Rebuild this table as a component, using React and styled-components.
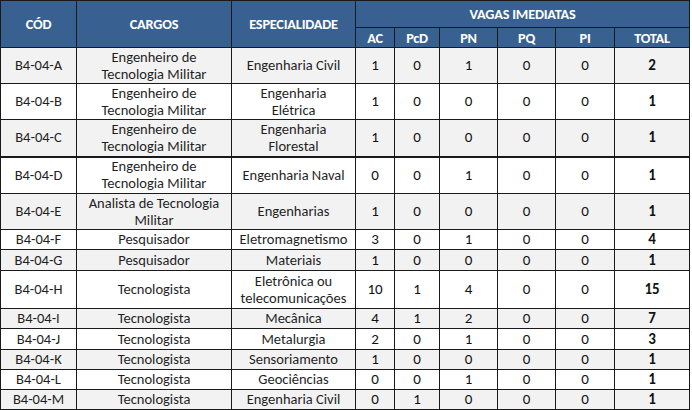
import React from 'react';
import styled, { createGlobalStyle } from 'styled-components';

const GlobalStyle = createGlobalStyle`
  html, body {
    margin: 0;
    padding: 0;
    background: #ffffff;
  }
`;

const HEAD_BLUE = '#386192';

const Table = styled.table`
  border-collapse: collapse;
  table-layout: fixed;
  width: 689px;
  font-family: Carlito, Calibri, Lato, "Liberation Sans", sans-serif;
  color: #1f1f1f;
`;

const HeadCell = styled.th`
  background: ${HEAD_BLUE};
  color: #ffffff;
  font-size: 14.3px;
  font-weight: 700;
  letter-spacing: -0.2px;
  border: 1px solid #1a1a1a;
  padding: 0;
  text-align: center;
  vertical-align: middle;
  height: ${(p) => p.h}px;
`;

const Row = styled.tr`
  height: ${(p) => p.h}px;
  background: ${(p) => (p.shaded ? '#f2f2f2' : '#ffffff')};
  border-top: ${(p) => (p.thick ? '2px' : '1px')} solid #1a1a1a;
`;

const Cell = styled.td`
  border: 1px solid #1a1a1a;
  padding: 0;
  text-align: center;
  vertical-align: middle;
  font-size: 14.5px;
  line-height: 17px;
  white-space: nowrap;
`;

const NumCell = styled(Cell)`
  font-size: 15px;
  color: #111111;
  font-weight: ${(p) => (p.bold ? 700 : 400)};
`;

const Line = styled.div`
  white-space: nowrap;
`;

const Lines = ({ text }) =>
  Array.isArray(text) ? text.map((t) => <Line key={t}>{t}</Line>) : text;

const widths = [76, 155, 124, 39, 45, 58, 58, 59, 75];

const ETM = ['Engenheiro de', 'Tecnologia Militar'];

const rows = [
  ['B4-04-A', ETM, 'Engenharia Civil', [1, 0, 1, 0, 0, 2], 36],
  ['B4-04-B', ETM, ['Engenharia', 'Elétrica'], [1, 0, 0, 0, 0, 1], 36],
  ['B4-04-C', ETM, ['Engenharia', 'Florestal'], [1, 0, 0, 0, 0, 1], 37],
  ['B4-04-D', ETM, 'Engenharia Naval', [0, 0, 1, 0, 0, 1], 37, true],
  ['B4-04-E', ['Analista de Tecnologia', 'Militar'], 'Engenharias', [1, 0, 0, 0, 0, 1], 36],
  ['B4-04-F', 'Pesquisador', 'Eletromagnetismo', [3, 0, 1, 0, 0, 4], 20],
  ['B4-04-G', 'Pesquisador', 'Materiais', [1, 0, 0, 0, 0, 1], 21],
  ['B4-04-H', 'Tecnologista', ['Eletrônica ou', 'telecomunicações'], [10, 1, 4, 0, 0, 15], 38],
  ['B4-04-I', 'Tecnologista', 'Mecânica', [4, 1, 2, 0, 0, 7], 20],
  ['B4-04-J', 'Tecnologista', 'Metalurgia', [2, 0, 1, 0, 0, 3], 21],
  ['B4-04-K', 'Tecnologista', 'Sensoriamento', [1, 0, 0, 0, 0, 1], 20],
  ['B4-04-L', 'Tecnologista', 'Geociências', [0, 0, 1, 0, 0, 1], 20],
  ['B4-04-M', 'Tecnologista', 'Engenharia Civil', [0, 1, 0, 0, 0, 1], 20],
];

const App = () => (
  <>
    <GlobalStyle />
    <Table>
      <colgroup>
        {widths.map((w, i) => (
          <col key={i} style={{ width: w }} />
        ))}
      </colgroup>
      <thead>
        <tr>
          <HeadCell rowSpan={2} h={26}>CÓD</HeadCell>
          <HeadCell rowSpan={2} h={26}>CARGOS</HeadCell>
          <HeadCell rowSpan={2} h={26}>ESPECIALIDADE</HeadCell>
          <HeadCell colSpan={6} h={26}>VAGAS IMEDIATAS</HeadCell>
        </tr>
        <tr>
          {['AC', 'PcD', 'PN', 'PQ', 'PI', 'TOTAL'].map((t) => (
            <HeadCell key={t} h={19}>{t}</HeadCell>
          ))}
        </tr>
      </thead>
      <tbody>
        {rows.map(([cod, cargo, esp, nums, h, thick], i) => (
          <Row key={cod} h={h} shaded={i % 2 === 0} thick={thick}>
            <Cell>{cod}</Cell>
            <Cell><Lines text={cargo} /></Cell>
            <Cell><Lines text={esp} /></Cell>
            {nums.map((n, j) => (
              <NumCell key={j} bold={j === 5}>{n}</NumCell>
            ))}
          </Row>
        ))}
      </tbody>
    </Table>
  </>
);

export default App;
